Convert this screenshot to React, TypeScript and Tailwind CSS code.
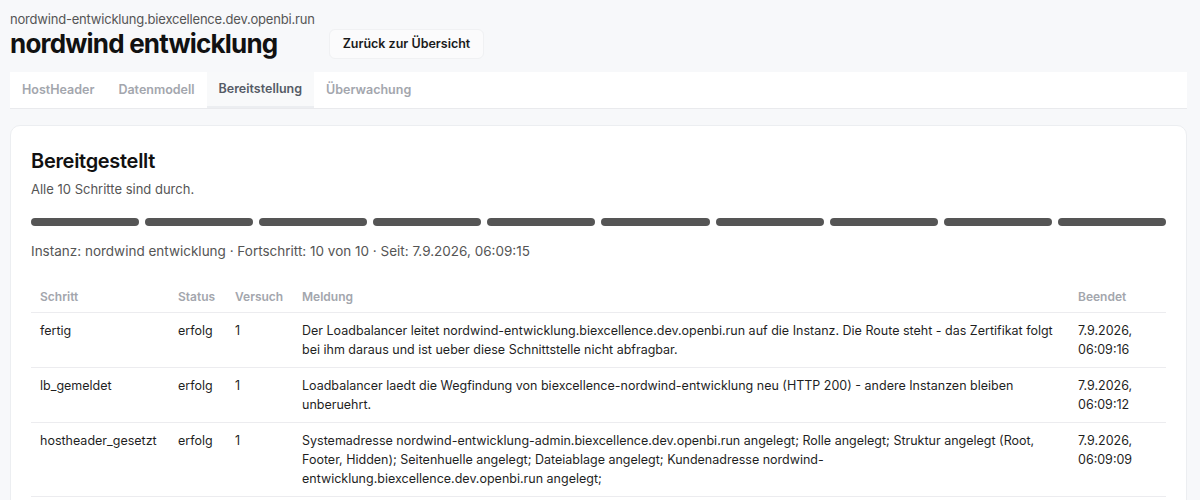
import React from "react";

type Row = { step: string; status: string; attempt: number; msg: string; done: [string, string] };

const rows: Row[] = [
  {
    step: "fertig",
    status: "erfolg",
    attempt: 1,
    msg: "Der Loadbalancer leitet nordwind-entwicklung.biexcellence.dev.openbi.run auf die Instanz. Die Route steht - das Zertifikat folgt bei ihm daraus und ist ueber diese Schnittstelle nicht abfragbar.",
    done: ["7.9.2026,", "06:09:16"],
  },
  {
    step: "lb_gemeldet",
    status: "erfolg",
    attempt: 1,
    msg: "Loadbalancer laedt die Wegfindung von biexcellence-nordwind-entwicklung neu (HTTP 200) - andere Instanzen bleiben unberuehrt.",
    done: ["7.9.2026,", "06:09:12"],
  },
  {
    step: "hostheader_gesetzt",
    status: "erfolg",
    attempt: 1,
    msg: "Systemadresse nordwind-entwicklung-admin.biexcellence.dev.openbi.run angelegt; Rolle angelegt; Struktur angelegt (Root, Footer, Hidden); Seitenhuelle angelegt; Dateiablage angelegt; Kundenadresse nordwind-entwicklung.biexcellence.dev.openbi.run angelegt;",
    done: ["7.9.2026,", "06:09:09"],
  },
];

const tabs = ["HostHeader", "Datenmodell", "Bereitstellung", "Überwachung"];

export default function App() {
  return (
    <div className="min-h-[500px] bg-[#f7f8fa] pl-[10px] pr-[13px] pt-[11px] font-['Inter',sans-serif] text-[#1a1a1a]">
      <div className="flex items-end gap-[14px]">
        <div>
          <p className="text-[13px] leading-[17px] tracking-[-0.2px] text-[#555]">nordwind-entwicklung.biexcellence.dev.openbi.run</p>
          <h1 className="mt-[1px] text-[26px] leading-[30px] font-bold tracking-[-0.8px] text-[#111]">nordwind entwicklung</h1>
        </div>
        <button
          type="button"
          className="h-[30px] rounded-md border border-[#f0f1f3] bg-[#fbfbfc] px-[13px] text-[12.5px] font-semibold text-[#1a1a1a]"
        >
          Zurück zur Übersicht
        </button>
      </div>

      <div className="mt-[13px] flex h-[37px] items-stretch border-b border-[#e9eaed] bg-white">
        {tabs.map((t) => (
          <div
            key={t}
            className={`flex items-center px-[12px] pt-[1px] text-[12.5px] font-semibold ${
              t === "Bereitstellung" ? "border-b-2 border-[#eceef1] bg-[#f8f9fa] text-[#555b66]" : "text-[#a3a6ad]"
            }`}
          >
            {t}
          </div>
        ))}
      </div>

      <div className="mt-[16px] rounded-[10px] border border-[#eceef1] bg-white px-[20px] pt-[23px] pb-4">
        <h2 className="text-[20px] leading-[24px] font-semibold tracking-[-0.3px] text-[#111]">Bereitgestellt</h2>
        <p className="mt-[7px] text-[13px] text-[#555]">Alle 10 Schritte sind durch.</p>

        <div className="mt-[18px] flex gap-[6px]">
          {Array.from({ length: 10 }).map((_, i) => (
            <div key={i} className="h-[8px] flex-1 rounded-full bg-[#555]" />
          ))}
        </div>

        <p className="mt-[15px] text-[13.5px] text-[#555]">
          Instanz: nordwind entwicklung · Fortschritt: 10 von 10 · Seit: 7.9.2026, 06:09:15
        </p>

        <table className="mt-[27px] w-full table-fixed border-collapse text-[12.5px]">
          <colgroup>
            <col className="w-[138px]" />
            <col className="w-[57px]" />
            <col className="w-[67px]" />
            <col />
            <col className="w-[97px]" />
          </colgroup>
          <thead>
            <tr className="border-b border-[#ececef]">
              <th className="px-[9px] pb-[6px] text-left text-[12px] font-semibold text-[#a3a6ad]">Schritt</th>
              <th className="px-[9px] pb-[6px] text-left text-[12px] font-semibold text-[#a3a6ad]">Status</th>
              <th className="px-[9px] pb-[6px] text-left text-[12px] font-semibold text-[#a3a6ad]">Versuch</th>
              <th className="px-[9px] pb-[6px] text-left text-[12px] font-semibold text-[#a3a6ad]">Meldung</th>
              <th className="px-[9px] pb-[6px] text-left text-[12px] font-semibold text-[#a3a6ad]">Beendet</th>
            </tr>
          </thead>
          <tbody>
            {rows.map((r) => (
              <tr key={r.step} className="border-b border-[#ececef] align-top leading-[19px] text-[#1f1f1f]">
                <td className="px-[9px] py-[8px]">{r.step}</td>
                <td className="px-[9px] py-[8px]">{r.status}</td>
                <td className="px-[9px] py-[8px]">{r.attempt}</td>
                <td className="px-[9px] py-[8px]">{r.msg}</td>
                <td className="px-[9px] py-[8px]">
                  {r.done[0]}
                  <br />
                  {r.done[1]}
                </td>
              </tr>
            ))}
          </tbody>
        </table>
      </div>
    </div>
  );
}
